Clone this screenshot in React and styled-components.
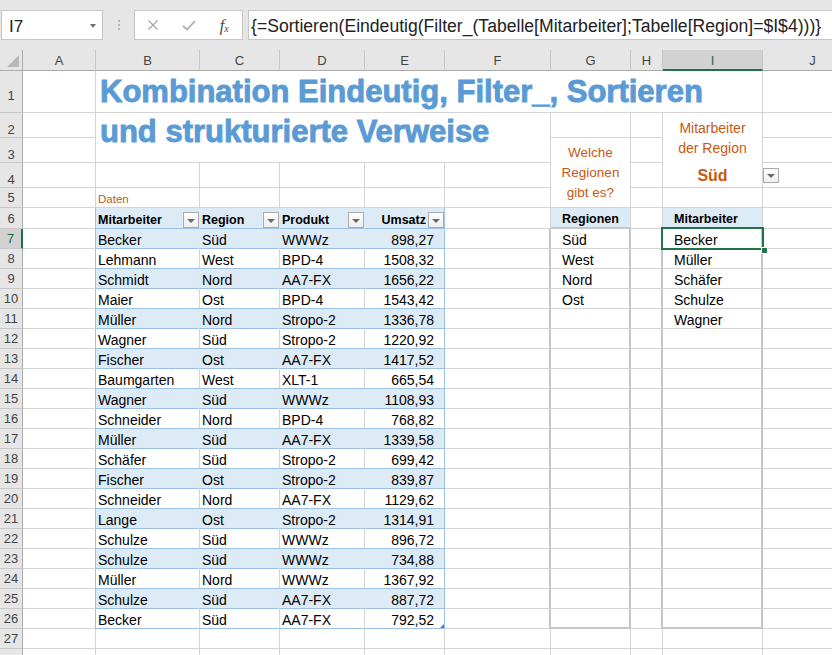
import React from 'react'
import styled, { createGlobalStyle } from 'styled-components'

const GRID = '#d4d4d4'
const BAND = '#ddebf7'
const TABLE_LINE = '#9bc2e6'
const BOX = '#c6c6c6'
const ORANGE = '#c65911'
const TITLE_BLUE = '#5b9bd5'
const GREEN = '#217346'

const COL_W = [23, 73, 104, 80, 85, 80, 106, 80, 32, 100, 100]
const ROW_H = [42, 25, 25, 25, 20, 21, ...Array(22).fill(20)]
const LETTERS = ['A', 'B', 'C', 'D', 'E', 'F', 'G', 'H', 'I', 'J']
const LAST_LABELLED_ROW = 27

const HEADERS = ['Mitarbeiter', 'Region', 'Produkt', 'Umsatz']
const DATA = [
  ['Becker', 'Süd', 'WWWz', '898,27'],
  ['Lehmann', 'West', 'BPD-4', '1508,32'],
  ['Schmidt', 'Nord', 'AA7-FX', '1656,22'],
  ['Maier', 'Ost', 'BPD-4', '1543,42'],
  ['Müller', 'Nord', 'Stropo-2', '1336,78'],
  ['Wagner', 'Süd', 'Stropo-2', '1220,92'],
  ['Fischer', 'Ost', 'AA7-FX', '1417,52'],
  ['Baumgarten', 'West', 'XLT-1', '665,54'],
  ['Wagner', 'Süd', 'WWWz', '1108,93'],
  ['Schneider', 'Nord', 'BPD-4', '768,82'],
  ['Müller', 'Süd', 'AA7-FX', '1339,58'],
  ['Schäfer', 'Süd', 'Stropo-2', '699,42'],
  ['Fischer', 'Ost', 'Stropo-2', '839,87'],
  ['Schneider', 'Nord', 'AA7-FX', '1129,62'],
  ['Lange', 'Ost', 'Stropo-2', '1314,91'],
  ['Schulze', 'Süd', 'WWWz', '896,72'],
  ['Schulze', 'Süd', 'WWWz', '734,88'],
  ['Müller', 'Nord', 'WWWz', '1367,92'],
  ['Schulze', 'Süd', 'AA7-FX', '887,72'],
  ['Becker', 'Süd', 'AA7-FX', '792,52'],
]
const REGIONS = ['Süd', 'West', 'Nord', 'Ost']
const STAFF = ['Becker', 'Müller', 'Schäfer', 'Schulze', 'Wagner']

// merged ranges (sheet rows / columns, A = 1)
const MERGES = [
  { r: 1, c: 2, rs: 1, cs: 8 },
  { r: 2, c: 2, rs: 2, cs: 5 },
  { r: 3, c: 7, rs: 3, cs: 1 },
  { r: 2, c: 9, rs: 3, cs: 1 },
]

const GlobalStyle = createGlobalStyle`
  html, body {
    margin: 0;
    padding: 0;
    background: #fff;
    overflow: hidden;
  }
  body {
    font-family: "Liberation Sans", Arial, sans-serif;
  }
`

const Window = styled.div`
  width: 832px;
  height: 655px;
  overflow: hidden;
  background: #fff;
`

const FormulaBar = styled.div`
  display: flex;
  align-items: flex-start;
  box-sizing: border-box;
  height: 50px;
  padding-top: 10px;
  background: #e6e6e6;
`

const NameBox = styled.div`
  box-sizing: border-box;
  display: flex;
  align-items: flex-start;
  width: 102px;
  height: 30px;
  margin-left: 1px;
  padding: 6px 0 0 7px;
  background: #fff;
  border: 1px solid #c6c6c6;
  font-size: 17px;
  line-height: 19px;
  color: #222;
`

const NameArrow = styled.span`
  margin: 7px 6px 0 auto;
  border-left: 3px solid transparent;
  border-right: 3px solid transparent;
  border-top: 4px solid #707070;
`

const Grip = styled.div`
  display: flex;
  flex-direction: column;
  align-items: center;
  gap: 2px;
  width: 31px;
  padding-top: 10px;

  span {
    width: 2px;
    height: 2px;
    background: #b4b4b4;
  }
`

const FxGroup = styled.div`
  box-sizing: border-box;
  display: flex;
  width: 109px;
  height: 30px;
  background: #fff;
  border: 1px solid #c6c6c6;
`

const FxSlot = styled.div`
  display: flex;
  align-items: center;
  justify-content: center;
  width: 36px;
  height: 100%;
`

const FxLabel = styled.span`
  font-family: "Liberation Serif", "Times New Roman", serif;
  font-style: italic;
  font-size: 16px;
  color: #444;
  padding-top: 2px;

  sub {
    font-size: 10px;
    vertical-align: -1px;
  }
`

const FormulaInput = styled.div`
  box-sizing: border-box;
  flex: 1;
  height: 30px;
  margin-left: 5px;
  padding: 6px 0 0 2px;
  background: #fff;
  border: 1px solid #c6c6c6;
  border-right: none;
  font-size: 17.6px;
  line-height: 19px;
  white-space: nowrap;
  color: #222;
`

const Sheet = styled.div`
  display: grid;
  grid-template-columns: ${COL_W.map((w) => `${w}px`).join(' ')};
  grid-template-rows: 21px ${ROW_H.map((h) => `${h}px`).join(' ')};
`

const Corner = styled.div`
  grid-row: 1;
  grid-column: 1;
  box-sizing: border-box;
  position: relative;
  background: #e6e6e6;
  border-right: 1px solid #ababab;
  border-bottom: 1px solid #ababab;
`

const ColHead = styled.div`
  grid-row: 1;
  box-sizing: border-box;
  display: flex;
  align-items: center;
  justify-content: center;
  background: ${(p) => (p.$sel ? '#d2d2d2' : '#e6e6e6')};
  border-right: 1px solid #c6c6c6;
  border-bottom: ${(p) => (p.$sel ? `2px solid ${GREEN}` : '1px solid #ababab')};
  color: ${(p) => (p.$sel ? '#1d6b40' : '#444')};
  font-size: 13px;
  padding-top: ${(p) => (p.$sel ? 1 : 0)}px;
`

const RowHead = styled.div`
  grid-column: 1;
  box-sizing: border-box;
  display: flex;
  align-items: center;
  justify-content: center;
  padding-top: ${(p) => (p.$tall ? 8 : 0)}px;
  background: ${(p) => (p.$sel ? '#d2d2d2' : '#e6e6e6')};
  border-right: ${(p) => (p.$sel ? `2px solid ${GREEN}` : '1px solid #ababab')};
  border-bottom: 1px solid #c8c8c8;
  color: ${(p) => (p.$sel ? '#1d6b40' : '#444')};
  font-size: 13px;
`

const Cell = styled.div`
  grid-row: ${(p) => p.$row} / span ${(p) => p.$rs || 1};
  grid-column: ${(p) => p.$col} / span ${(p) => p.$cs || 1};
  box-sizing: border-box;
  position: relative;
  z-index: ${(p) => p.$z || 'auto'};
  display: flex;
  align-items: flex-end;
  justify-content: ${(p) => p.$justify || 'flex-start'};
  min-width: 0;
  padding: 0 ${(p) => p.$pr ?? 2}px 0 ${(p) => p.$pl ?? 2}px;
  background: ${(p) => p.$bg};
  border-right: ${(p) => p.$rw}px solid ${(p) => p.$rc};
  border-bottom: ${(p) => p.$bw}px solid ${(p) => p.$bc};
  font-size: 14px;
  line-height: 16px;
  white-space: nowrap;
  color: #000;
`

const TitleCell = styled(Cell)`
  align-items: flex-start;
  padding-top: ${(p) => p.$top}px;
`

const Title = styled.span`
  padding-left: 2px;
  font-size: 31px;
  font-weight: 700;
  line-height: 31px;
  color: ${TITLE_BLUE};
  -webkit-text-stroke: 0.9px ${TITLE_BLUE};
`

const NoteCell = styled(Cell)`
  flex-direction: column;
  align-items: center;
  justify-content: center;
  font-size: 13.5px;
  line-height: 20px;
  color: ${ORANGE};
`

const RegionCell = styled(Cell)`
  flex-direction: column;
  align-items: center;
  justify-content: flex-start;
  padding-top: 5px;
  font-size: 14px;
  line-height: 20px;
  color: ${ORANGE};
`

const RegionValue = styled.span`
  margin-top: 8px;
  font-size: 16px;
  font-weight: 700;
`

const Caption = styled.span`
  font-size: 11.5px;
  color: ${ORANGE};
`

const HeadLabel = styled.span`
  font-size: 12.5px;
  font-weight: 700;
  margin-right: ${(p) => (p.$tight ? 2 : 0)}px;
`

const DropButton = styled.span`
  box-sizing: border-box;
  display: flex;
  align-items: center;
  justify-content: center;
  flex-shrink: 0;
  width: 16px;
  height: ${(p) => p.$h || 16}px;
  margin-left: ${(p) => (p.$push ? 'auto' : '0')};
  border: 1px solid #ababab;
  background: linear-gradient(#ffffff, #eeeeee);

  &::after {
    content: '';
    margin-top: 1px;
    border-left: 4px solid transparent;
    border-right: 4px solid transparent;
    border-top: 4px solid #6a6a6a;
  }
`

const ValidationDrop = styled(DropButton)`
  position: absolute;
  left: 100px;
  top: 55px;
`

const Selection = styled.span`
  position: absolute;
  top: -2px;
  left: -2px;
  right: -3px;
  bottom: -2px;
  border: 2px solid ${GREEN};
  pointer-events: none;
`

const FillHandle = styled.span`
  position: absolute;
  right: -5px;
  bottom: -5px;
  width: 5px;
  height: 5px;
  background: ${GREEN};
  box-shadow: 0 0 0 1px #fff;
`

const ResizeMark = styled.span`
  position: absolute;
  right: 0;
  bottom: 0;
  border-left: 4px solid transparent;
  border-bottom: 4px solid #4472c4;
`

const isCovered = (r, c) =>
  MERGES.some(
    (m) =>
      r >= m.r && r < m.r + m.rs && c >= m.c && c < m.c + m.cs && !(r === m.r && c === m.c)
  )

function frameOf(r, c) {
  const f = { $bg: '#fff', $rc: GRID, $rw: 1, $bc: GRID, $bw: 1 }
  if (r >= 6 && r <= 26 && c >= 2 && c <= 5) {
    const band = r === 6 || r % 2 === 1
    f.$bg = band ? BAND : '#fff'
    f.$bc = TABLE_LINE
    f.$rc = c === 5 ? TABLE_LINE : band ? BAND : GRID
  }
  if (c === 1 && r >= 6 && r <= 26) f.$rc = TABLE_LINE
  if (r >= 7 && r <= 26 && c >= 6 && c <= 9) {
    f.$rw = 2
    f.$rc = BOX
  }
  if ((c === 7 || c === 9) && (r === 6 || r === 26)) {
    f.$bw = 2
    f.$bc = BOX
  }
  if ((c === 7 || c === 9) && r === 6) f.$bg = BAND
  return f
}

function renderCell(r, c) {
  const m = MERGES.find((x) => x.r === r && x.c === c)
  const base = {
    key: `${r}-${c}`,
    $row: r + 1,
    $col: c + 1,
    $rs: m ? m.rs : 1,
    $cs: m ? m.cs : 1,
    ...frameOf(r, c),
  }

  if (r === 1 && c === 2)
    return (
      <TitleCell {...base} $top={5}>
        <Title>Kombination Eindeutig, Filter_, Sortieren</Title>
      </TitleCell>
    )
  if (r === 2 && c === 2)
    return (
      <TitleCell {...base} $top={3}>
        <Title>und strukturierte Verweise</Title>
      </TitleCell>
    )
  if (r === 3 && c === 7)
    return (
      <NoteCell {...base}>
        <span>Welche</span>
        <span>Regionen</span>
        <span>gibt es?</span>
      </NoteCell>
    )
  if (r === 2 && c === 9)
    return (
      <RegionCell {...base} $z={2}>
        <span>Mitarbeiter</span>
        <span>der Region</span>
        <RegionValue>Süd</RegionValue>
        <ValidationDrop $h={15} />
      </RegionCell>
    )
  if (r === 5 && c === 2)
    return (
      <Cell {...base}>
        <Caption>Daten</Caption>
      </Cell>
    )
  if (r === 6 && c >= 2 && c <= 5) {
    const right = c === 5
    return (
      <Cell {...base} $pr={0} $justify={right ? 'flex-end' : 'flex-start'}>
        <HeadLabel $tight={right}>{HEADERS[c - 2]}</HeadLabel>
        <DropButton $push={!right} />
      </Cell>
    )
  }
  if (r >= 7 && r <= 26 && c >= 2 && c <= 5) {
    const value = DATA[r - 7][c - 2]
    const num = c === 5
    return (
      <Cell {...base} $justify={num ? 'flex-end' : 'flex-start'} $pr={num ? 10 : 2}>
        {value}
        {r === 26 && num && <ResizeMark />}
      </Cell>
    )
  }
  if (r === 6 && c === 7)
    return (
      <Cell {...base} $justify="center">
        <HeadLabel>Regionen</HeadLabel>
      </Cell>
    )
  if (r === 6 && c === 9)
    return (
      <Cell {...base} $pl={11}>
        <HeadLabel>Mitarbeiter</HeadLabel>
      </Cell>
    )
  if (c === 7 && r >= 7 && r < 7 + REGIONS.length)
    return (
      <Cell {...base} $pl={11}>
        {REGIONS[r - 7]}
      </Cell>
    )
  if (c === 9 && r >= 7 && r < 7 + STAFF.length)
    return (
      <Cell {...base} $pl={11} $z={r === 7 ? 3 : undefined}>
        {STAFF[r - 7]}
        {r === 7 && (
          <Selection>
            <FillHandle />
          </Selection>
        )}
      </Cell>
    )
  return <Cell {...base} />
}

const cells = []
for (let r = 1; r <= ROW_H.length; r++) {
  for (let c = 1; c <= LETTERS.length; c++) {
    if (!isCovered(r, c)) cells.push(renderCell(r, c))
  }
}

const App = () => (
  <Window>
    <GlobalStyle />
    <FormulaBar>
      <NameBox>
        I7
        <NameArrow />
      </NameBox>
      <Grip>
        <span />
        <span />
        <span />
      </Grip>
      <FxGroup>
        <FxSlot>
          <svg width="12" height="12" viewBox="0 0 12 12">
            <path d="M1.5 1.5L10.5 10.5M10.5 1.5L1.5 10.5" stroke="#a6a6a6" strokeWidth="1.3" />
          </svg>
        </FxSlot>
        <FxSlot>
          <svg width="14" height="11" viewBox="0 0 14 11">
            <path d="M1 5.8L5 9.5L13 1" stroke="#a6a6a6" strokeWidth="1.6" fill="none" />
          </svg>
        </FxSlot>
        <FxSlot>
          <FxLabel>
            f<sub>x</sub>
          </FxLabel>
        </FxSlot>
      </FxGroup>
      <FormulaInput>
        {'{=Sortieren(Eindeutig(Filter_(Tabelle[Mitarbeiter];Tabelle[Region]=$I$4)))}'}
      </FormulaInput>
    </FormulaBar>

    <Sheet>
      <Corner>
        <svg width="22" height="20" viewBox="0 0 22 20" style={{ display: 'block' }}>
          <polygon points="19,5 19,17 7,17" fill="#b8b8b8" />
        </svg>
      </Corner>
      {LETTERS.map((l, i) => (
        <ColHead key={l} $sel={l === 'I'} style={{ gridColumn: i + 2 }}>
          {l}
        </ColHead>
      ))}
      {ROW_H.map((h, i) => (
        <RowHead key={i} $sel={i + 1 === 7} $tall={h > 21} style={{ gridRow: i + 2 }}>
          {i + 1 <= LAST_LABELLED_ROW ? i + 1 : ''}
        </RowHead>
      ))}
      {cells}
    </Sheet>
  </Window>
)

export default App
